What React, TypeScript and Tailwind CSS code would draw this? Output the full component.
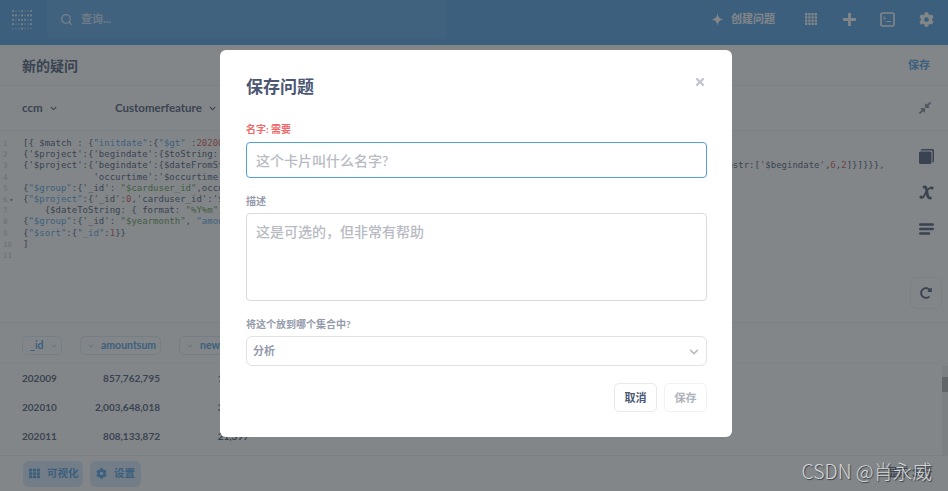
import React from "react";
import { FaCog, FaPlus, FaTh, FaCompressAlt, FaRedoAlt, FaTimes, FaChevronDown } from "react-icons/fa";
import { Search } from "lucide-react";

const cjk = "font-['Lato','Noto_Sans_CJK_SC',sans-serif]";

function Logo() {
  const rows = [
    [1, 0, 0, 1, 0, 0, 1],
    [1, 1, 0, 1, 0, 1, 1],
    [1, 0, 1, 1, 1, 0, 1],
    [1, 0, 0, 1, 0, 0, 1],
    [0, 0, 0, 1, 0, 0, 0],
  ];
  return (
    <svg width="22" height="22" viewBox="0 0 22 22" className="shrink-0">
      {rows.map((r, y) =>
        r.map((v, x) => <circle key={`${x}-${y}`} cx={2 + x * 3} cy={2 + y * 4.4} r="1.1" fill="white" fillOpacity={v ? 0.8 : 0.3} />)
      )}
    </svg>
  );
}

function Dots() {
  const p = [0, 3.2, 6.4, 9.6];
  return (
    <svg width="12" height="12" viewBox="0 0 12 12" className="ml-[29px]">
      {p.map((y) => p.map((x) => <rect key={`${x}-${y}`} x={x} y={y} width="2.4" height="2.4" rx=".4" fill="white" />))}
    </svg>
  );
}

type Seg = [string, string?];
const B = "text-[#509ee3]";
const G = "text-[#5c9a4b]";
const R = "text-[#d9534f]";

const lines: Seg[][] = [
  [["[{ $match : {"], ['"initdate"', B], [":{"], ['"$gt"', B], [" :"], ["202009", R], ["}}},"]],
  [["{'$project':{'begindate':{$toString:'$begindate'},'occurtime':1}},"]],
  [["{'$project':{'begindate':{$dateFromString:{string:{$concat:[{$substr:['$begindate',0,4]},'-',{$substr:['$begindate',4,2]},'-',{$substr:['$begindate',"], ["6", R], [","], ["2", R], ["]}]}}},"]],
  [["             'occurtime':'$occurtime'}},"]],
  [["{"], ['"$group"', B], [":{'_id': "], ['"$carduser_id"', G], [",occurtime:1}},"]],
  [["{"], ['"$project"', B], [":{'_id':"], ["0", R], [",'carduser_id':'$_id',"]],
  [["    {$dateToString: { format: "], ['"%Y%m"', G], [", date:'$begindate'}}}},"]],
  [["{"], ['"$group"', B], [":{'_id': "], ['"$yearmonth"', G], [", "], ['"amount"', B], [":1}},"]],
  [["{"], ['"$sort"', B], [":{"], ['"_id"', B], [":"], ["1", R], ["}}"]],
  [["]"]],
  [[""]],
];

function Editor() {
  return (
    <div className="flex-1 min-w-0 flex pt-[7px] font-['DejaVu_Sans_Mono',monospace] text-[9px] leading-[11.2px]">
      <div className="w-[23px] shrink-0 pl-[3px] text-[#c2c6d0]">
        {lines.map((_, i) => (
          <div key={i} className="h-[11.2px] flex items-center gap-[2px]">
            <span className="text-[7.5px]">{i + 1}</span>
            {i === 5 && <span className="text-[6px] text-[#4c5773]">▾</span>}
          </div>
        ))}
      </div>
      <div className="text-[#4c5773] whitespace-pre">
        {lines.map((l, i) => (
          <div key={i} className="h-[11.2px]">
            {l.map((s, j) => (
              <span key={j} className={s[1]}>{s[0]}</span>
            ))}
          </div>
        ))}
      </div>
    </div>
  );
}

function Pill({ label, w, first = false }: { label: string; w: string; first?: boolean }) {
  const chev = <FaChevronDown className="text-[#b3d6f4] w-[6px] h-[6px] shrink-0" />;
  return (
    <div className={`h-[19px] ${w} flex items-center gap-[7px] pl-[7px] rounded-[5px] border border-[#dcecf9] text-[#509ee3] font-bold text-[10.5px] shrink-0 overflow-hidden`}>
      {first ? (
        <>
          <span>{label}</span>
          {chev}
        </>
      ) : (
        <>
          {chev}
          <span>{label}</span>
        </>
      )}
    </div>
  );
}

function Row({ a, b, c }: { a: string; b: string; c: string }) {
  return (
    <div className="h-[29px] flex items-center text-[10px] font-bold text-[#4c5773] px-[22px]">
      <span className="w-[58px]">{a}</span>
      <span className="w-[80px] text-right">{b}</span>
      <span className="w-[89px] text-right">{c}</span>
    </div>
  );
}

export default function App() {
  return (
    <div className={`relative w-[948px] h-[491px] overflow-hidden bg-white flex flex-col ${cjk}`}>
      {/* page */}
      <header className="h-[45px] shrink-0 bg-[#509ee3] flex items-start text-white">
        <div className="w-[47px] h-[38px] pl-[11px] pt-[9px] shrink-0">
          <Logo />
        </div>
        <div className="w-[400px] h-[38px] rounded-b-[6px] bg-[#5aa5e6] flex items-center pl-[13px] gap-[8px]">
          <Search className="w-[13px] h-[13px] text-white/80" strokeWidth={2.4} />
          <span className="text-[11px] font-bold text-white/70">查询...</span>
        </div>
        <div className="flex-1" />
        <div className="h-[38px] flex items-center pr-[14px]">
          <svg width="13" height="13" viewBox="0 0 14 14" className="mr-[7px]">
            <path d="M7 0C7.5 4.5 9.5 6.5 14 7C9.5 7.5 7.5 9.5 7 14C6.5 9.5 4.5 7.5 0 7C4.5 6.5 6.5 4.5 7 0Z" fill="white" />
          </svg>
          <span className="text-[11px] font-bold text-white w-[45px] whitespace-nowrap">创建问题</span>
          <Dots />
          <FaPlus className="ml-[25px] w-[15px] h-[15px] text-white" />
          <svg width="15" height="15" viewBox="0 0 15 15" className="ml-[23px]">
            <rect x="1" y="1" width="13" height="13" rx="1.5" fill="none" stroke="white" strokeWidth="1.6" />
            <path d="M3.5 4.5L5.5 6L3.5 7.5M6.5 9.5H11" fill="none" stroke="white" strokeWidth="1" />
          </svg>
          <FaCog className="ml-[24px] w-[15px] h-[15px] text-white" />
        </div>
      </header>

      <div className="h-[41px] shrink-0 border-b border-[#eef0f2] flex items-center justify-between pr-[18px] pl-[22px]">
        <span className="text-[14px] font-bold text-[#4c5773]">新的疑问</span>
        <span className="text-[11px] font-bold text-[#509ee3]">保存</span>
      </div>

      <div className="h-[45px] shrink-0 border-b border-[#eef0f2] flex items-center pl-[22px] pr-[16px] text-[#4c5773] font-bold text-[11.5px]">
        <span className="w-[93px] flex items-center gap-[7px]">
          ccm
          <FaChevronDown className="w-[7px] h-[7px]" />
        </span>
        <span className="flex items-center gap-[7px]">
          Customerfeature
          <FaChevronDown className="w-[7px] h-[7px]" />
        </span>
        <div className="flex-1" />
        <FaCompressAlt className="w-[14px] h-[14px] text-[#4c5773]/70" />
      </div>

      <div className="h-[192px] shrink-0 border-b border-[#eef0f2] flex">
        <Editor />
        <div className="w-[38px] shrink-0 -ml-[38px] mr-[3px] flex flex-col items-center pt-[18px]">
          <svg width="15" height="15" viewBox="0 0 15 15" className="shrink-0">
            <path d="M3 0H13.5A1.5 1.5 0 0 1 15 1.5V12A1.5 1.5 0 0 1 13.5 13.5V2.5A1 1 0 0 0 12.5 1.5H1.5A2 2 0 0 1 3 0Z" fill="#4c5773" />
            <rect x="0" y="2.5" width="12.5" height="12.5" rx="1.5" fill="#4c5773" />
          </svg>
          <svg width="15" height="15" viewBox="0 0 15 15" className="mt-[21px] shrink-0">
            <path d="M4 2.5C7 1 7.5 3 8 7.5C8.5 12 9.5 14 12.5 12.5" fill="none" stroke="#4c5773" strokeWidth="2.8" />
            <path d="M13 2.5C10 2 6.5 8 5 11C4 13 2.5 13 1.5 12" fill="none" stroke="#4c5773" strokeWidth="1.8" />
            <circle cx="2" cy="12" r="1.6" fill="#4c5773" />
            <circle cx="13" cy="3" r="1.6" fill="#4c5773" />
          </svg>
          <svg width="15" height="12" viewBox="0 0 15 12" className="mt-[23px] shrink-0">
            <path d="M1.2 1.5H13.8M1.2 6H13.8M1.2 10.5H10" stroke="#4c5773" strokeWidth="2.4" strokeLinecap="round" />
          </svg>
          <div className="mt-[42px] w-[32px] h-[32px] shrink-0 rounded-[6px] border border-[#eef0f2] flex items-center justify-center">
            <FaRedoAlt className="w-[12px] h-[12px] text-[#4c5773]" />
          </div>
        </div>
      </div>

      <div className="flex-1 min-h-0 relative">
        <div className="h-[41px] border-b border-[#f4f5f6] flex items-start gap-[18px] px-[22px] pt-[13px]">
          <Pill label="_id" w="w-[40px]" first />
          <Pill label="amountsum" w="w-[81px]" />
          <Pill label="newcount" w="w-[90px]" />
        </div>
        <Row a="202009" b="857,762,795" c="19,204" />
        <Row a="202010" b="2,003,648,018" c="31,458" />
        <Row a="202011" b="808,133,872" c="21,397" />
        <div className="absolute right-0 top-[43px] bottom-0 w-[6px] bg-[#f1f1f1]">
          <div className="mt-[11px] h-[15px] bg-[#b0b0b0]" />
        </div>
      </div>

      <footer className="h-[36px] shrink-0 border-t border-[#eef0f2] flex items-center gap-[7px] pl-[23px] pr-[16px]">
        <div className="w-[60px] h-[26px] pl-[6px] rounded-[6px] bg-[#d6e9f9] flex items-center gap-[7px] text-[#509ee3] font-bold text-[10.5px] whitespace-nowrap">
          <FaTh className="w-[11px] h-[11px] shrink-0" />
          可视化
        </div>
        <div className="w-[51px] h-[26px] pl-[6px] rounded-[6px] bg-[#d6e9f9] flex items-center gap-[7px] text-[#509ee3] font-bold text-[10.5px] whitespace-nowrap">
          <FaCog className="w-[11px] h-[11px] shrink-0" />
          设置
        </div>
        <div className="flex-1" />
        <span className="text-[11px] font-bold text-[#4c5773]">显示 3 行</span>
      </footer>

      {/* overlay */}
      <div className="absolute inset-0 bg-[rgba(46,53,59,0.6)]" />

      {/* modal */}
      <div className="absolute left-[220px] top-[50px] w-[512px] h-[387px] bg-white rounded-[6px] pl-[26px] pr-[25px] flex flex-col">
        <div className="h-[62px] shrink-0 flex items-start justify-between">
          <h1 className="mt-[25px] text-[17px] font-bold text-[#4c5773] leading-[24px]">保存问题</h1>
          <FaTimes className="mt-[26px] mr-[1px] w-[12px] h-[12px] text-[#c2c6d0]" />
        </div>
        <label className="mt-[10px] h-[14px] leading-[14px] text-[10px] font-bold text-[#ef6a6a]">名字: 需要</label>
        <div className="mt-[6px] h-[36px] shrink-0 rounded-[4px] border border-[#509ee3] flex items-center pl-[9px] text-[14px] text-[#b8bbc3] font-medium">
          这个卡片叫什么名字?
        </div>
        <label className="mt-[16px] h-[14px] leading-[14px] text-[10px] font-bold text-[#949aab]">描述</label>
        <div className="mt-[5px] h-[88px] shrink-0 rounded-[4px] border border-[#d8dadf] pl-[9px] pt-[7px] text-[14px] leading-[22px] text-[#b8bbc3] font-medium">
          这是可选的，但非常有帮助
        </div>
        <label className="mt-[16px] h-[14px] leading-[14px] text-[10px] font-bold text-[#949aab]">将这个放到哪个集合中?</label>
        <div className="mt-[5px] h-[30px] shrink-0 rounded-[6px] border border-[#e0e2e6] flex items-center justify-between pl-[6px] pr-[7px] pt-[1px] text-[11px] font-bold text-[#949aab]">
          分析
          <FaChevronDown className="w-[10px] h-[10px] text-[#b8bbc3]" />
        </div>
        <div className="mt-[17px] flex justify-end gap-[7px]">
          <div className="w-[43px] h-[29px] pt-[1px] rounded-[5px] border border-[#e8e9ec] flex items-center justify-center text-[11px] font-bold text-[#4c5773]">取消</div>
          <div className="w-[43px] h-[29px] pt-[1px] rounded-[5px] border border-[#f0f1f3] flex items-center justify-center text-[11px] font-bold text-[#b0b3bb]">保存</div>
        </div>
      </div>

      {/* watermark */}
      <div className="absolute right-[16px] bottom-[7px] text-[19.5px] leading-[26px] text-[#d4d6d8] [text-shadow:1px_1px_1px_#3a3f44] font-['Noto_Sans_CJK_SC',sans-serif] font-light whitespace-nowrap">
        CSDN @肖永威
      </div>
    </div>
  );
}
